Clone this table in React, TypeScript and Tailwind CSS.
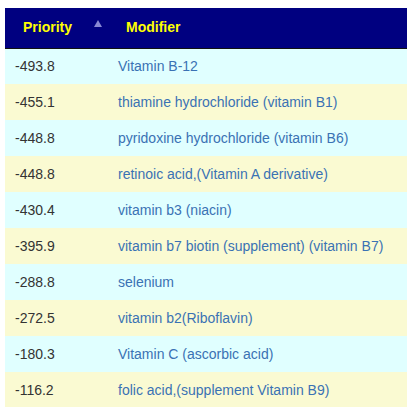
import React from 'react';

const rows: [string, string][] = [
    ['-493.8', 'Vitamin B-12'],
    ['-455.1', 'thiamine hydrochloride (vitamin B1)'],
    ['-448.8', 'pyridoxine hydrochloride (vitamin B6)'],
    ['-448.8', 'retinoic acid,(Vitamin A derivative)'],
    ['-430.4', 'vitamin b3 (niacin)'],
    ['-395.9', 'vitamin b7 biotin (supplement) (vitamin B7)'],
    ['-288.8', 'selenium'],
    ['-272.5', 'vitamin b2(Riboflavin)'],
    ['-180.3', 'Vitamin C (ascorbic acid)'],
    ['-116.2', 'folic acid,(supplement Vitamin B9)'],
];

export default function App() {
    return (
        <div className="bg-white pt-[8px] pl-[5px] h-[407px] overflow-hidden" style={{ fontFamily: '"Liberation Sans", Arial, sans-serif' }}>
            <table className="w-[402px] border-collapse text-[14px]">
                <thead>
                    <tr className="bg-[#000080] h-[40px] border-b-[1.5px] border-[#111]">
                        <th className="w-[103px] text-left pl-[18px] font-bold text-[#ffff00] relative">
                            Priority
                            <span className="absolute left-[89px] top-[12px] w-0 h-0 border-l-[4px] border-r-[4px] border-b-[7px] border-l-transparent border-r-transparent border-b-[#8888d4]" />
                        </th>
                        <th className="text-left pl-[18px] font-bold text-[#ffff00]">Modifier</th>
                    </tr>
                </thead>
                <tbody>
                    {rows.map(([p, m], i) => (
                        <tr key={i} className={`h-[36px] ${i % 2 === 0 ? 'bg-[#e0ffff]' : 'bg-[#fafad2]'}`}>
                            <td className="pl-[10px] text-[#333333]">{p}</td>
                            <td className="pl-[10px] text-[#3a72b4]">{m}</td>
                        </tr>
                    ))}
                </tbody>
            </table>
        </div>
    );
}
